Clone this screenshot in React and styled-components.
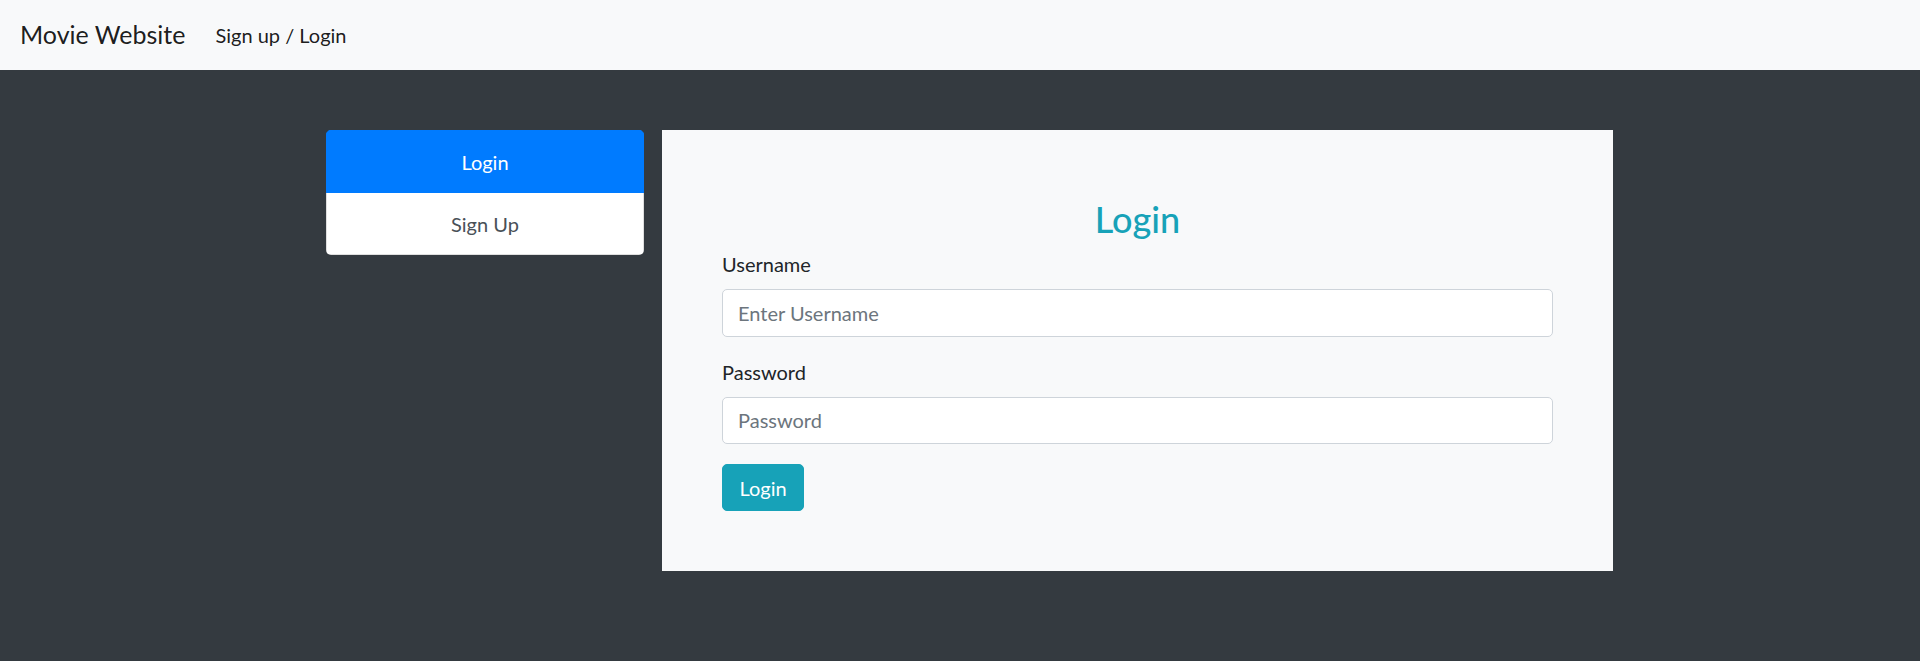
import React, { useState } from "react";
import styled, { createGlobalStyle, css } from "styled-components";

const GlobalStyle = createGlobalStyle`
  * {
    box-sizing: border-box;
  }

  html,
  body {
    margin: 0;
    padding: 0;
  }

  body {
    min-height: 100vh;
    background: #343a40;
    font-family: Lato, "Open Sans", Roboto, "Liberation Sans", sans-serif;
    font-size: 20px;
    line-height: 1.5;
    color: #212529;
  }
`;

const TABS = [
  { id: 0, name: "Login" },
  { id: 1, name: "Sign Up" },
];

const App = () => {
  const [currentTab, setCurrentTab] = useState(0);

  return (
    <>
      <GlobalStyle />
      <NavBar>
        <Brand href="#">Movie Website</Brand>
        <NavLink href="#">Sign up / Login</NavLink>
      </NavBar>
      <Main>
        <ListGroup>
          {TABS.map(({ id, name }) => (
            <ListItem
              key={id}
              selected={currentTab === id}
              onClick={() => setCurrentTab(id)}
            >
              {name}
            </ListItem>
          ))}
        </ListGroup>
        <Card>
          <Title>Login</Title>
          <FormGroup>
            <Label htmlFor="username">Username</Label>
            <Input id="username" type="text" placeholder="Enter Username" />
          </FormGroup>
          <FormGroup>
            <Label htmlFor="password">Password</Label>
            <Input id="password" type="password" placeholder="Password" />
          </FormGroup>
          <SubmitButton type="button">Login</SubmitButton>
        </Card>
      </Main>
    </>
  );
};

export default App;

const NavBar = styled.nav`
  display: flex;
  align-items: center;
  height: 70px;
  padding: 0 20px;
  background: #f8f9fa;
`;

const Brand = styled.a`
  margin-right: 20px;
  padding: 6px 0;
  font-size: 25px;
  line-height: 37.5px;
  color: rgba(0, 0, 0, 0.9);
  text-decoration: none;
`;

const NavLink = styled.a`
  padding: 10px;
  font-size: 20px;
  line-height: 30px;
  color: rgba(0, 0, 0, 0.9);
  text-decoration: none;
`;

const Main = styled.main`
  display: flex;
  align-items: flex-start;
  gap: 18px;
  padding: 60px 307px 60px 326px;
`;

const ListGroup = styled.div`
  display: flex;
  flex-direction: column;
  width: 318px;
  flex-shrink: 0;
  border-radius: 5px;
  overflow: hidden;
`;

const ListItem = styled.div`
  padding: 15.5px 25px;
  text-align: center;
  line-height: 30px;
  font-size: 20px;
  color: #495057;
  background: #fff;
  border: 1px solid rgba(0, 0, 0, 0.125);
  cursor: pointer;

  & + & {
    border-top: 0;
  }

  ${({ selected }) =>
    selected &&
    css`
      color: #fff;
      background: #007bff;
      border-color: #007bff;
    `};
`;

const Card = styled.div`
  flex: 1;
  padding: 60px;
  background: #f8f9fa;
`;

const Title = styled.h3`
  margin: 9px 0 9px;
  text-align: center;
  font-size: 36px;
  font-weight: 500;
  line-height: 41px;
  color: #17a2b8;
`;

const FormGroup = styled.div`
  margin-bottom: 20px;
`;

const Label = styled.label`
  display: inline-block;
  margin-bottom: 10px;
  line-height: 30px;
`;

const Input = styled.input`
  display: block;
  width: 100%;
  height: 47.5px;
  padding: 7.5px 15px;
  font-family: inherit;
  font-size: 20px;
  line-height: 30px;
  color: #495057;
  background: #fff;
  border: 1px solid #ced4da;
  border-radius: 5px;

  &::placeholder {
    color: #6c757d;
  }
`;

const SubmitButton = styled.button`
  display: inline-block;
  padding: 7.5px 16.5px;
  font-family: inherit;
  font-size: 20px;
  line-height: 30px;
  color: #fff;
  background: #17a2b8;
  border: 1px solid #17a2b8;
  border-radius: 5px;
  cursor: pointer;
`;
